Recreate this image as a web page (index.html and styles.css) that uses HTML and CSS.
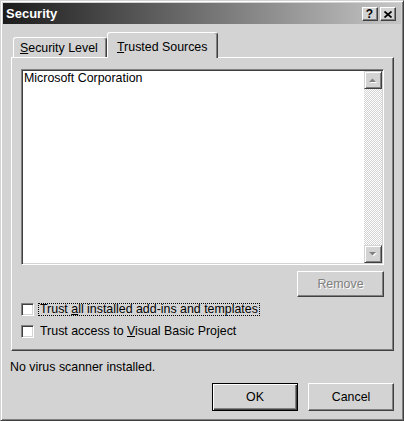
FILE: index.html
```html
<!DOCTYPE html>
<html>
<head>
<meta charset="utf-8">
<link rel="stylesheet" href="styles.css">
</head>
<body>
<div class="window">
  <div class="titlebar">
    <span class="title">Security</span>
    <div class="caption-buttons">
      <div class="cap-btn help">?</div>
      <div class="cap-btn close">
        <svg width="8" height="7" viewBox="0 0 8 7"><path d="M0.5 0.5 L7.5 6.5 M7.5 0.5 L0.5 6.5" stroke="#000" stroke-width="1.7" fill="none"/></svg>
      </div>
    </div>
  </div>
  <div class="tabs">
    <div class="tab"><u>S</u>ecurity Level</div>
    <div class="tab active"><u>T</u>rusted Sources</div>
  </div>
  <div class="panel">
    <div class="listbox">
      <div class="list-items">
        <div class="item">Microsoft Corporation</div>
      </div>
      <div class="scrollbar">
        <div class="sb-btn">
          <svg width="8" height="5" viewBox="0 0 8 5"><path d="M1 5 L8 5 L4.5 1.5 Z" fill="#fff"/><path d="M0 4 L7 4 L3.5 0.5 Z" fill="#808080"/></svg>
        </div>
        <div class="sb-track"></div>
        <div class="sb-btn">
          <svg width="8" height="5" viewBox="0 0 8 5"><path d="M1 1 L8 1 L4.5 4.5 Z" fill="#fff"/><path d="M0 0 L7 0 L3.5 3.5 Z" fill="#808080"/></svg>
        </div>
      </div>
    </div>
    <div class="remove-row">
      <div class="btn btn-remove">Remove</div>
    </div>
    <div class="checks">
      <div class="check"><span class="box"></span><span class="label focus">Trust <u>a</u>ll installed add-ins and templates</span></div>
      <div class="check"><span class="box"></span><span class="label">Trust access to <u>V</u>isual Basic Project</span></div>
    </div>
  </div>
  <div class="status">No virus scanner installed.</div>
  <div class="buttons">
    <div class="btn btn-default">OK</div>
    <div class="btn">Cancel</div>
  </div>
</div>
</body>
</html>
```
FILE: styles.css
```css
* { box-sizing: border-box; }
html, body { margin: 0; padding: 0; }
body {
  width: 404px;
  height: 421px;
  overflow: hidden;
  background: #d3d3d3;
  font-family: "Liberation Sans", Arial, sans-serif;
  font-size: 12.4px;
  color: #000;
}
.window {
  width: 404px;
  height: 421px;
  background: #d3d3d3;
  border: 1px solid;
  border-color: #d3d3d3 #404040 #404040 #d3d3d3;
  box-shadow: inset 1px 1px 0 #fff, inset -1px -1px 0 #808080;
  padding: 2px;
  display: flex;
  flex-direction: column;
}
.titlebar {
  height: 21px;
  flex: none;
  display: flex;
  align-items: center;
  padding: 0 5px 0 3px;
  background: linear-gradient(to right, #1c1c1c, #c6c6c6);
}
.title {
  color: #fff;
  font-weight: bold;
  font-size: 13px;
  line-height: 21px;
}
.caption-buttons {
  margin-left: auto;
  display: flex;
  gap: 2px;
  margin-top: 1px;
}
.cap-btn {
  width: 16px;
  height: 14px;
  background: #d3d3d3;
  border: 1px solid;
  border-color: #fff #404040 #404040 #fff;
  box-shadow: inset -1px -1px 0 #808080;
  display: flex;
  align-items: center;
  justify-content: center;
}
.help {
  font-weight: bold;
  font-size: 12px;
  line-height: 12px;
  padding-right: 1px;
}
.close svg { display: block; margin-right: 1px; }
.tabs {
  flex: none;
  display: flex;
  align-items: flex-end;
  height: 25px;
  margin: 8px 0 0 10px;
  position: relative;
  z-index: 1;
}
.tab {
  height: 20px;
  width: 94px;
  background: #d3d3d3;
  border: 1px solid;
  border-bottom: none;
  border-color: #fff #404040 #404040 #fff;
  border-radius: 3px 3px 0 0;
  box-shadow: inset -1px 0 0 #808080;
  line-height: 14px;
  padding: 3px 0 0 6px;
  white-space: nowrap;
}
.tab.active {
  width: 111px;
  height: 26px;
  margin-bottom: -1px;
  padding: 7px 0 0 9px;
}
.panel {
  flex: none;
  margin-left: 8px;
  width: 383px;
  height: 294px;
  border: 1px solid;
  border-color: #fff #404040 #404040 #fff;
  box-shadow: inset -1px -1px 0 #808080;
  padding: 11px 0 0 9px;
}
.listbox {
  width: 363px;
  height: 196px;
  background: #fff;
  border: 1px solid;
  border-color: #808080 #fff #fff #808080;
  box-shadow: inset 1px 1px 0 #404040, inset -1px -1px 0 #d3d3d3;
  padding: 1px;
  display: flex;
}
.list-items { flex: 1; }
.item {
  line-height: 14px;
  padding-left: 1px;
}
.scrollbar {
  width: 18px;
  display: flex;
  flex-direction: column;
}
.sb-btn {
  height: 18px;
  flex: none;
  background: #d3d3d3;
  border: 1px solid;
  border-color: #d3d3d3 #404040 #404040 #d3d3d3;
  box-shadow: inset 1px 1px 0 #fff, inset -1px -1px 0 #808080;
  display: flex;
  align-items: center;
  justify-content: center;
}
.sb-btn svg { display: block; }
.sb-track {
  flex: 1;
  background: repeating-conic-gradient(#fff 0 25%, #d3d3d3 0 50%) 0 0 / 2px 2px;
}
.remove-row {
  width: 363px;
  display: flex;
  justify-content: flex-end;
  margin-top: 6px;
}
.btn {
  width: 86px;
  height: 28px;
  background: #d3d3d3;
  border: 1px solid;
  border-color: #fff #404040 #404040 #fff;
  box-shadow: inset -1px -1px 0 #808080;
  display: flex;
  align-items: center;
  justify-content: center;
  line-height: 14px;
}
.btn-remove {
  width: 87px;
  height: 26px;
  color: #808080;
  text-shadow: 1px 1px 0 #fff;
}
.btn-default {
  border-color: #000;
  box-shadow: inset 1px 1px 0 #fff, inset -1px -1px 0 #404040, inset -2px -2px 0 #808080;
}
.checks {
  margin-top: 6px;
  display: flex;
  flex-direction: column;
  gap: 9px;
}
.check {
  display: flex;
  align-items: flex-start;
  height: 13px;
}
.box {
  width: 13px;
  height: 13px;
  flex: none;
  background: #fff;
  border: 1px solid;
  border-color: #808080 #fff #fff #808080;
  box-shadow: inset 1px 1px 0 #404040, inset -1px -1px 0 #d3d3d3;
  margin-right: 4px;
}
.label {
  display: inline-block;
  height: 13px;
  line-height: 11px;
  padding: 0 1px;
  border: 1px dotted transparent;
  white-space: nowrap;
}
.label.focus { border-color: #000; }
.status {
  flex: none;
  margin-top: 9px;
  padding-left: 7px;
  line-height: 14px;
}
.buttons {
  flex: none;
  display: flex;
  justify-content: flex-end;
  gap: 10px;
  margin-top: 9px;
  padding-right: 7px;
}
```
